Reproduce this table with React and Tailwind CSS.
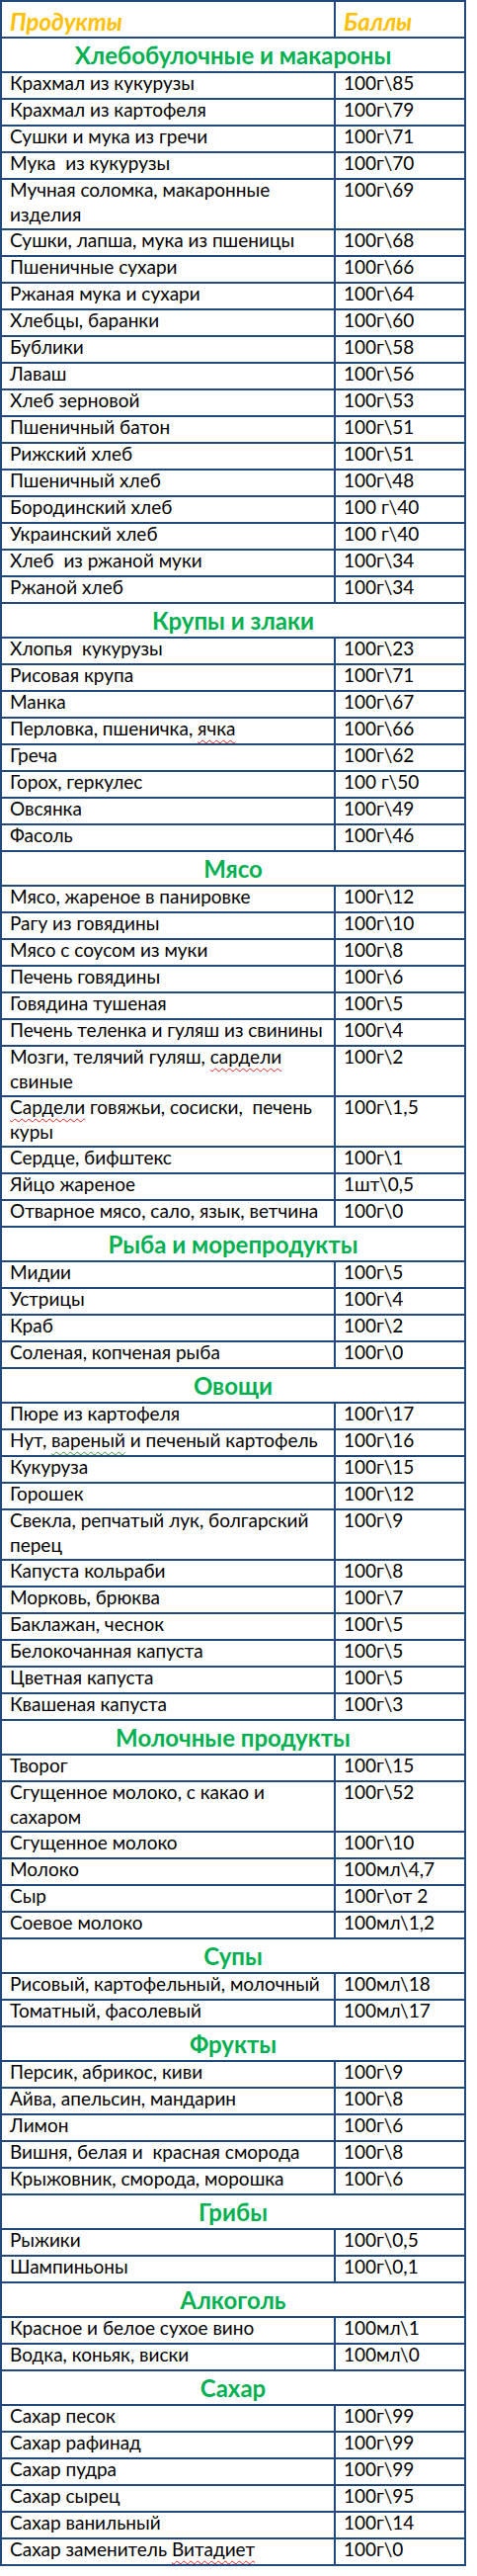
const B = 'border-[#22497d]'

function W({ children, green }) {
  return (
    <span className={green ? 'underline decoration-wavy decoration-[#3a9a3a] decoration-1 underline-offset-[4px]' : 'underline decoration-wavy decoration-[#e02020] decoration-1 underline-offset-[4px]'}>
      {children}
    </span>
  )
}

const sections = [
  {
    title: 'Хлебобулочные и макароны',
    rows: [
      ['Крахмал из кукурузы', '100г\\85'],
      ['Крахмал из картофеля', '100г\\79'],
      ['Сушки и мука из гречи', '100г\\71'],
      ['Мука  из кукурузы', '100г\\70'],
      [<>Мучная соломка, макаронные<br />изделия</>, '100г\\69'],
      ['Сушки, лапша, мука из пшеницы', '100г\\68'],
      ['Пшеничные сухари', '100г\\66'],
      ['Ржаная мука и сухари', '100г\\64'],
      ['Хлебцы, баранки', '100г\\60'],
      ['Бублики', '100г\\58'],
      ['Лаваш', '100г\\56'],
      ['Хлеб зерновой', '100г\\53'],
      ['Пшеничный батон', '100г\\51'],
      ['Рижский хлеб', '100г\\51'],
      ['Пшеничный хлеб', '100г\\48'],
      ['Бородинский хлеб', '100 г\\40'],
      ['Украинский хлеб', '100 г\\40'],
      ['Хлеб  из ржаной муки', '100г\\34'],
      ['Ржаной хлеб', '100г\\34'],
    ],
  },
  {
    title: 'Крупы и злаки',
    rows: [
      ['Хлопья  кукурузы', '100г\\23'],
      ['Рисовая крупа', '100г\\71'],
      ['Манка', '100г\\67'],
      [<>Перловка, пшеничка, <W>ячка</W></>, '100г\\66'],
      ['Греча', '100г\\62'],
      ['Горох, геркулес', '100 г\\50'],
      ['Овсянка', '100г\\49'],
      ['Фасоль', '100г\\46'],
    ],
  },
  {
    title: 'Мясо',
    rows: [
      ['Мясо, жареное в панировке', '100г\\12'],
      ['Рагу из говядины', '100г\\10'],
      ['Мясо с соусом из муки', '100г\\8'],
      ['Печень говядины', '100г\\6'],
      ['Говядина тушеная', '100г\\5'],
      ['Печень теленка и гуляш из свинины', '100г\\4'],
      [<>Мозги, телячий гуляш, <W>сардели</W><br />свиные</>, '100г\\2'],
      [<><W>Сардели</W> говяжьи, сосиски,  печень<br />куры</>, '100г\\1,5'],
      ['Сердце, бифштекс', '100г\\1'],
      ['Яйцо жареное', '1шт\\0,5'],
      ['Отварное мясо, сало, язык, ветчина', '100г\\0'],
    ],
  },
  {
    title: 'Рыба и морепродукты',
    rows: [
      ['Мидии', '100г\\5'],
      ['Устрицы', '100г\\4'],
      ['Краб', '100г\\2'],
      ['Соленая, копченая рыба', '100г\\0'],
    ],
  },
  {
    title: 'Овощи',
    rows: [
      ['Пюре из картофеля', '100г\\17'],
      [<>Нут, <W green>вареный</W> и печеный картофель</>, '100г\\16'],
      ['Кукуруза', '100г\\15'],
      ['Горошек', '100г\\12'],
      [<>Свекла, репчатый лук, болгарский<br />перец</>, '100г\\9'],
      ['Капуста кольраби', '100г\\8'],
      ['Морковь, брюква', '100г\\7'],
      ['Баклажан, чеснок', '100г\\5'],
      ['Белокочанная капуста', '100г\\5'],
      ['Цветная капуста', '100г\\5'],
      ['Квашеная капуста', '100г\\3'],
    ],
  },
  {
    title: 'Молочные продукты',
    rows: [
      ['Творог', '100г\\15'],
      [<>Сгущенное молоко, с какао и<br />сахаром</>, '100г\\52'],
      ['Сгущенное молоко', '100г\\10'],
      ['Молоко', '100мл\\4,7'],
      ['Сыр', '100г\\от 2'],
      ['Соевое молоко', '100мл\\1,2'],
    ],
  },
  {
    title: 'Супы',
    rows: [
      ['Рисовый, картофельный, молочный', '100мл\\18'],
      ['Томатный, фасолевый', '100мл\\17'],
    ],
  },
  {
    title: 'Фрукты',
    rows: [
      ['Персик, абрикос, киви', '100г\\9'],
      ['Айва, апельсин, мандарин', '100г\\8'],
      ['Лимон', '100г\\6'],
      ['Вишня, белая и  красная сморода', '100г\\8'],
      ['Крыжовник, сморода, морошка', '100г\\6'],
    ],
  },
  {
    title: 'Грибы',
    rows: [
      ['Рыжики', '100г\\0,5'],
      ['Шампиньоны', '100г\\0,1'],
    ],
  },
  {
    title: 'Алкоголь',
    rows: [
      ['Красное и белое сухое вино', '100мл\\1'],
      ['Водка, коньяк, виски', '100мл\\0'],
    ],
  },
  {
    title: 'Сахар',
    rows: [
      ['Сахар песок', '100г\\99'],
      ['Сахар рафинад', '100г\\99'],
      ['Сахар пудра', '100г\\99'],
      ['Сахар сырец', '100г\\95'],
      ['Сахар ванильный', '100г\\14'],
      [<>Сахар заменитель <W>Витадиет</W></>, '100г\\0'],
    ],
  },
]

function Row({ name, value, last }) {
  return (
    <div className={last ? 'flex' : `flex border-b-2 ${B}`}>
      <div className={`w-[338px] shrink-0 border-r-2 ${B} pl-2 min-h-[25px] leading-[24.5px]`}>
        <div className="-mt-0.5 pb-0.5 whitespace-pre">{name}</div>
      </div>
      <div className="flex-1 pl-2 min-h-[25px] leading-[24.5px]">
        <div className="-mt-0.5 pb-0.5 whitespace-pre">{value}</div>
      </div>
    </div>
  )
}

export default function App() {
  return (
    <div className="bg-white min-h-[2606px] font-[family-name:Lato,sans-serif] text-[19px] text-black">
      <div className={`w-[472px] border-2 ${B}`}>
        <div className={`flex h-[37px] border-b-2 ${B} text-[24px] font-bold italic text-[#ffc000] leading-[34px]`}>
          <div className={`w-[338px] shrink-0 border-r-2 ${B} pl-2 pt-[3px]`}>Продукты</div>
          <div className="flex-1 pl-2 pt-[3px]">Баллы</div>
        </div>
        {sections.map((s, si) => (
          <div key={s.title}>
            <div className={`h-[35px] border-b-2 ${B} text-center text-[24px] font-bold leading-[33px] text-[#00b050]`}>
              {s.title}
            </div>
            {s.rows.map(([name, value], i) => (
              <Row
                key={i}
                name={name}
                value={value}
                last={si === sections.length - 1 && i === s.rows.length - 1}
              />
            ))}
          </div>
        ))}
      </div>
    </div>
  )
}
